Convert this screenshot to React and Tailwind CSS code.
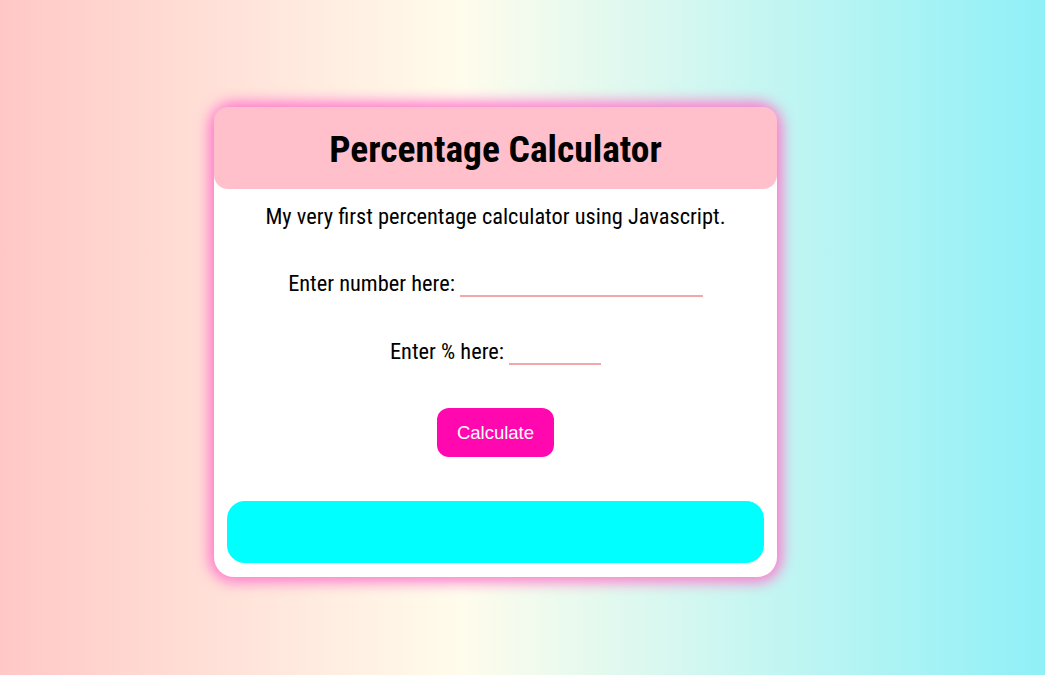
export default function App() {
  return (
    <div className="min-h-[675px] w-full bg-[linear-gradient(to_right,#ffc8c6,#fffcec_44%,#8ff0f7)] flex pt-[107px] font-['Roboto',sans-serif]">
      <div className="ml-[214px] w-[563px] h-[470px] bg-white rounded-[20px] shadow-[0_0_14px_5px_#ff78cc] flex flex-col items-center">
        {/* header */}
        <div className="w-full h-[82px] pt-[2px] bg-[#ffc0cb] rounded-[14px] flex items-center justify-center">
          <h1 className="text-[37.5px] leading-[44px] font-bold [font-stretch:75%] text-black">Percentage Calculator</h1>
        </div>

        <p className="mt-[14px] text-[22.4px] [font-stretch:75%] leading-[27px]">
          My very first percentage calculator using Javascript.
        </p>

        <div className="mt-[40px] flex items-end text-[22.4px] [font-stretch:75%] leading-[27px]">
          <span>Enter number here:</span>
          <span className="ml-[5px] w-[243px] h-[2px] bg-[#f0a8aa]" />
        </div>

        <div className="mt-[41px] flex items-end text-[22.4px] [font-stretch:75%] leading-[27px]">
          <span>Enter % here:</span>
          <span className="ml-[5px] w-[92px] h-[2px] bg-[#f0a8aa]" />
        </div>

        <button className="mt-[43px] w-[117px] h-[49px] rounded-[12px] bg-[#ff08b0] text-white text-[18.5px] font-['Liberation_Sans',sans-serif]">
          Calculate
        </button>

        <div className="mt-[44px] w-[537px] h-[62px] rounded-[18px] bg-[#00ffff]" />
      </div>
    </div>
  );
}
